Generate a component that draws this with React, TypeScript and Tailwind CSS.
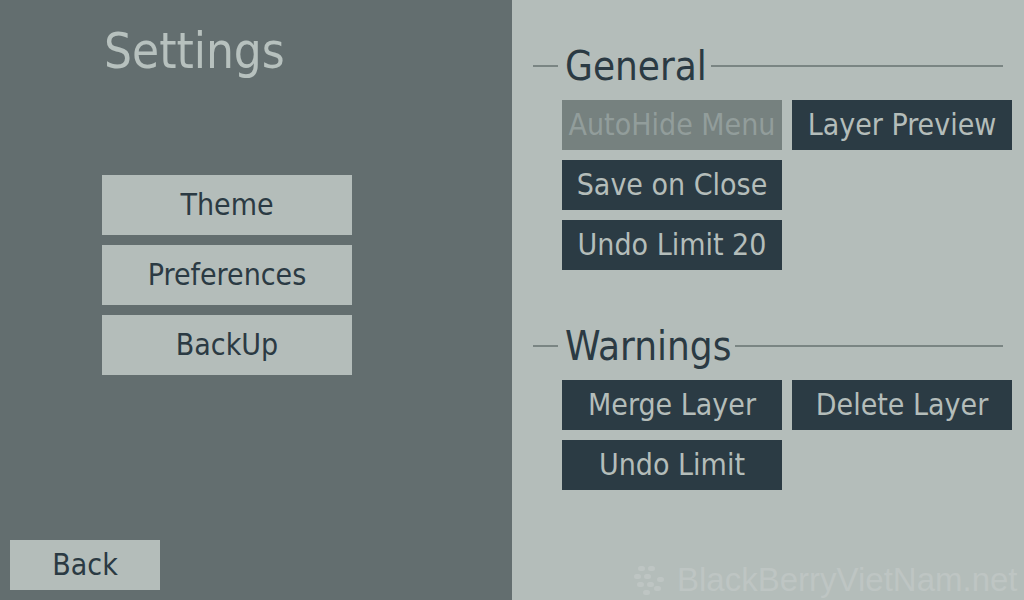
import React from 'react';

const font = "font-['DejaVu_Sans_Condensed','DejaVu_Sans',sans-serif] font-stretch-condensed";

interface Option {
  label: string;
  disabled?: boolean;
}

// each inner array is one row of buttons
const general: Option[][] = [
  [{ label: 'AutoHide Menu', disabled: true }, { label: 'Layer Preview' }],
  [{ label: 'Save on Close' }],
  [{ label: 'Undo Limit 20' }],
];

const warnings: Option[][] = [
  [{ label: 'Merge Layer' }, { label: 'Delete Layer' }],
  [{ label: 'Undo Limit' }],
];

const MenuButton = ({ label }: { label: string }) => (
  <button className="flex h-[60px] w-[250px] items-center justify-center bg-[#b4bdba] text-[30px] leading-none text-[#2b3a43]">
    {label}
  </button>
);

const OptionButton = ({ label, disabled }: Option) => (
  <button
    className={`flex h-[50px] w-[220px] shrink-0 items-center justify-center whitespace-nowrap text-[30px] leading-none ${
      disabled ? 'bg-[#76817f] text-[#929d9b]' : 'bg-[#2b3b44] text-[#b4bdba]'
    }`}
  >
    {label}
  </button>
);

const Section = ({ title, rows }: { title: string; rows: Option[][] }) => (
  <div className="flex flex-col">
    <div className="flex h-[40px] items-center">
      <div className="h-[2px] w-[25px] bg-[#7a8583]" />
      <span className="ml-[7px] mr-[4px] text-[40px] leading-none text-[#2b3a43]">{title}</span>
      <div className="h-[2px] flex-1 bg-[#7a8583]" />
    </div>
    <div className="mt-[14px] flex flex-col gap-[10px] pl-[29px]">
      {rows.map((row, i) => (
        <div key={i} className="flex gap-[10px]">
          {row.map((it) => (
            <OptionButton key={it.label} {...it} />
          ))}
        </div>
      ))}
    </div>
  </div>
);

const BBLogo = () => (
  <svg width="36" height="30" viewBox="0 0 36 30" fill="#bec5c3">
    <rect x="5" y="1" width="7" height="5" rx="2.5" />
    <rect x="15" y="1" width="7" height="5" rx="2.5" />
    <rect x="1" y="9" width="7" height="5" rx="2.5" />
    <rect x="11" y="9" width="7" height="5" rx="2.5" />
    <rect x="24" y="12" width="7" height="5" rx="2.5" />
    <rect x="4" y="17" width="7" height="5" rx="2.5" />
    <rect x="14" y="17" width="7" height="5" rx="2.5" />
    <rect x="21" y="21" width="7" height="5" rx="2.5" />
    <rect x="10" y="25" width="7" height="5" rx="2.5" />
  </svg>
);

export default function App() {
  return (
    <div className={`flex h-[600px] w-[1024px] overflow-hidden ${font}`}>
      <div className="flex w-[512px] flex-col bg-[#636e6f]">
        <h1 className="pl-[104px] pt-[27px] text-[49px] font-normal leading-none text-[#b7c1be]">Settings</h1>
        <div className="ml-[102px] mt-[99px] flex flex-col gap-[10px]">
          <MenuButton label="Theme" />
          <MenuButton label="Preferences" />
          <MenuButton label="BackUp" />
        </div>
        <button className="mb-[10px] ml-[10px] mt-auto flex h-[50px] w-[150px] items-center justify-center bg-[#b4bdba] text-[30px] leading-none text-[#2b3a43]">
          Back
        </button>
      </div>
      <div className="relative flex w-[512px] flex-col overflow-hidden bg-[#b4bdba] pl-[21px] pr-[21px] pt-[46px]">
        <Section title="General" rows={general} />
        <div className="mt-[56px]">
          <Section title="Warnings" rows={warnings} />
        </div>
        {/* watermark */}
        <div className="pointer-events-none absolute bottom-[4px] left-[121px] flex items-center gap-[8px] whitespace-nowrap">
          <BBLogo />
          <span className="font-['Liberation_Sans',sans-serif] text-[33px] leading-none text-[#bec5c3]">
            BlackBerryVietNam.net
          </span>
        </div>
      </div>
    </div>
  );
}
